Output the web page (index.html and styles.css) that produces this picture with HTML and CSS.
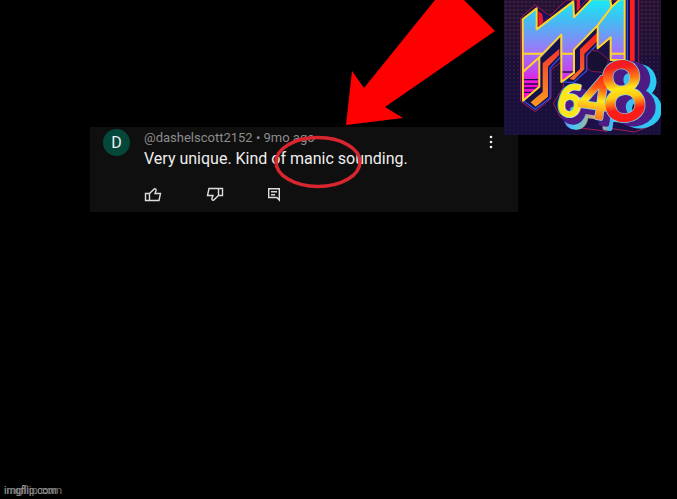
FILE: index.html
```html
<!DOCTYPE html>
<html lang="en">
<head>
<meta charset="utf-8">
<meta name="viewport" content="width=device-width, initial-scale=1">
<title>Comment</title>
<link rel="stylesheet" href="styles.css">
</head>
<body>
<main class="stage">
  <article class="comment">
    <span class="avatar">D</span>
    <div class="body">
      <div class="meta">@dashelscott2152 • 9mo ago</div>
      <p class="text">Very unique. Kind of manic sounding.</p>
      <div class="actions">
        <button class="action" type="button" aria-label="Like"><svg width="18" height="16" viewBox="0 0 18 16"><path d="M1.500 6.500h4v7h-4zM5.500 6.500l5-4.800q2 0 1.500 2l-1 2.800h5.500l-1.500 7h-9.500"/></svg></button>
        <button class="action" type="button" aria-label="Dislike"><svg width="18" height="16" viewBox="0 0 18 16"><path d="M16.500 8.500h-4v-7h4zM12.500 8.500l-5 4.800q-2 0-1.500-2l1-2.800h-5.500l1.500-7h9.500"/></svg></button>
        <button class="action reply" type="button" aria-label="Reply"><svg width="14" height="16" viewBox="0 0 14 16"><path d="M.7 1.700h10.600v11.300l-2.500-2.500h-8.100zM3 4.700h6M3 7.700h4"/></svg></button>
      </div>
    </div>
    <button class="more" type="button" aria-label="More options"><svg width="4" height="14" viewBox="0 0 4 14"><circle cx="2" cy="2" r="1.300"/><circle cx="2" cy="7" r="1.300"/><circle cx="2" cy="12" r="1.300"/></svg></button>
    <svg class="ring" width="90" height="54" viewBox="0 0 90 54" aria-hidden="true"><ellipse cx="45" cy="27" rx="42" ry="24.500"/></svg>
  </article>

  <svg class="arrow" width="150" height="126" viewBox="0 0 150 126" aria-hidden="true"><path d="M0 125 6 71 18 88 89 0H118L149 31 39 107 57 118Z"/></svg>

  <svg class="logo" width="157" height="135" viewBox="12 0 471 405" role="img" aria-label="M 648 logo">
    <defs>
      <pattern id="dots" width="12" height="12" patternUnits="userSpaceOnUse"><circle cx="6" cy="6" r="3" fill="#4b1943"/></pattern>
      <pattern id="tiles" width="12" height="12" patternUnits="userSpaceOnUse"><rect x="2" y="2" width="8" height="8" rx="2" fill="#3c1a3a"/></pattern>
      <linearGradient id="sky" x1="0" y1="0" x2="0" y2="300" gradientUnits="userSpaceOnUse"><stop offset="0" stop-color="#18eaf6"/><stop offset=".2" stop-color="#42bdf3"/><stop offset=".5" stop-color="#9b78f8"/><stop offset=".7" stop-color="#bd48ef"/><stop offset=".85" stop-color="#ff08d8"/></linearGradient>
      <linearGradient id="side" x1="0" y1="80" x2="0" y2="320" gradientUnits="userSpaceOnUse"><stop offset="0" stop-color="#ff1b18"/><stop offset=".4" stop-color="#f2472c"/><stop offset="1" stop-color="#ff9a20"/></linearGradient>
      <linearGradient id="four" x1="0" y1="225" x2="0" y2="350" gradientUnits="userSpaceOnUse"><stop offset="0" stop-color="#ff2418"/><stop offset=".3" stop-color="#ff5a18"/><stop offset=".6" stop-color="#ffe81a"/><stop offset="1" stop-color="#ff7a20"/></linearGradient>
      <linearGradient id="eight" x1="0" y1="180" x2="0" y2="365" gradientUnits="userSpaceOnUse"><stop offset=".1" stop-color="#f31c20"/><stop offset=".3" stop-color="#ff7a18"/><stop offset=".45" stop-color="#ffe81a"/><stop offset=".6" stop-color="#ffcb12"/><stop offset=".8" stop-color="#ff1c18"/></linearGradient>
      <linearGradient id="rim" x1="160" y1="0" x2="450" y2="0" gradientUnits="userSpaceOnUse"><stop offset="0" stop-color="#a64be0"/><stop offset=".25" stop-color="#45cdf0"/><stop offset=".5" stop-color="#ff9a4a"/><stop offset=".62" stop-color="#46b8f0"/><stop offset="1" stop-color="#2cc9f2"/></linearGradient>
      <linearGradient id="base" x1="0" y1="0" x2="0" y2="1"><stop offset="0" stop-color="#1e1030"/><stop offset=".45" stop-color="#181036"/><stop offset="1" stop-color="#17103d"/></linearGradient>
      <linearGradient id="fade" x1="0" y1="0" x2="0" y2="1"><stop offset=".2" stop-color="#17103d" stop-opacity="0"/><stop offset=".9" stop-color="#17103d" stop-opacity=".7"/></linearGradient>
    </defs>
    <path fill="url(#base)" d="M12 0h471v405H12z"/>
    <path fill="url(#tiles)" d="M12 0h471v168H12z"/>
    <path fill="url(#dots)" d="M12 168h471v237H12z"/>
    <path fill="url(#fade)" d="M12 0h471v405H12z"/>

    <path fill="#1b1148" stroke="#a51b50" stroke-width="3" d="M62 54 105 14 149 48 200 0H416V205L428 214 424 262 456 345 446 380 404 396 330 385 322 394 240 384 180 350 160 310 190 262V180L153 210V296L106 335 62 304Z"/>
    <path fill="#16114b" stroke="#314bdf" stroke-width="4" d="M118 176 182 108V170L150 205V294L106 328 70 302 118 258Z"/>
    <path fill="url(#side)" d="M128 190 178 146V164L144 200V290L107 320 92 307 128 276Z"/>
    <path fill="#16114b" stroke="#314bdf" stroke-width="4" d="M222 150 293 78V132L260 166V212L220 248 190 246 222 218Z"/>
    <path fill="url(#side)" d="M240 148 291 98V124L253 162V208L222 240 208 237 240 207Z"/>
    <path fill="#e91932" d="M115 34 145 54 115 80Z"/><path fill="#17135a" d="M126 34 150 49 130 66Z"/>
    <path fill="#e51c35" d="M230 0 260 0 230 37Z"/><path fill="#1c145b" d="M240 0h18l-18 22z"/>
    <path fill="#16114b" d="M374 0h38v202l-38-15z"/>
    <path fill="#ff2022" d="M390 0h14v196l-14-10z"/><path fill="#3348db" d="M380 0h4v185h-4z"/>
    <path fill="#171033" stroke="#7d194c" stroke-width="3" d="M276 151 295 154 325 178 320 218 275 214 262 205V168Z"/>

    <path fill="url(#sky)" d="M68 58 110 25V88L220 4 222 52 275-2H331L334 22 360-2H374V180H332V112L293 145V76L222 149V218L184 246V104L118 172V260L69 302Z"/>
    <path fill="#1b1148" d="M71 237h45v4H71zM71 250h45v4H71zM71 262h43v4H71zM71 275h30v4H71zM187 214h33v4h-33z"/>
    <path fill="none" stroke="#ffd52a" stroke-width="6" stroke-linejoin="round" d="M68 58 110 25V88L220 4 222 52 275-2H331L334 22 360-2H374V180H332V112L293 145V76L222 149V218L184 246V104L118 172V260L69 302ZM68 161H128M68 217 118 172M184 161H222M332 161H374M334 22 293 76"/>

    <g class="digits under" stroke="url(#rim)" fill="url(#rim)">
      <text x="190" y="374" font-size="134" transform="rotate(14 200 340)">6</text>
      <text x="264" y="378" font-size="176" transform="rotate(8 280 300)">4</text>
      <text x="346" y="382" font-size="246" transform="rotate(-8 375 280)">8</text>
    </g>
    <g class="digits depth">
      <text x="178" y="360" font-size="134" transform="rotate(14 200 340)">6</text>
      <text x="252" y="366" font-size="176" transform="rotate(8 280 300)">4</text>
      <text x="328" y="372" font-size="246" transform="rotate(-8 375 280)">8</text>
    </g>
    <g class="digits glow">
      <text x="163" y="346" font-size="134" transform="rotate(14 200 340)">6</text>
      <text x="234" y="353" font-size="176" transform="rotate(8 280 300)">4</text>
      <text x="302" y="360" font-size="246" transform="rotate(-8 375 280)">8</text>
    </g>
    <g class="digits face">
      <text x="163" y="346" font-size="134" fill="#ffe51c" stroke="#ffe51c" transform="rotate(14 200 340)">6</text>
      <text x="234" y="353" font-size="176" fill="url(#four)" stroke="url(#four)" transform="rotate(8 280 300)">4</text>
      <text x="302" y="360" font-size="246" fill="url(#eight)" stroke="url(#eight)" transform="rotate(-8 375 280)">8</text>
    </g>
  </svg>

  <footer class="watermark"><span>imgflip.com</span><span class="echo" aria-hidden="true">imgflip.com</span></footer>
</main>
</body>
</html>
```
FILE: styles.css
```css
* { box-sizing: border-box; }

body {
  margin: 0;
  background: #000;
  color: #eee;
  font-family: Roboto, "Liberation Sans", sans-serif;
}

.stage {
  position: relative;
  display: flex;
  flex-direction: column;
  min-height: 100vh;
  padding: 127px 0 0 90px;
  overflow: hidden;
}

.comment {
  position: relative;
  display: flex;
  align-items: flex-start;
  gap: 14px;
  width: 100%;
  max-width: 428px;
  padding: 2px 25px 9px 13px;
  background: #0f0f0f;
}

.avatar {
  display: grid;
  place-items: center;
  flex: none;
  width: 27px;
  height: 27px;
  border-radius: 50%;
  background: #04483b;
  font-size: 16px;
}

.body { flex: 1; }

.meta {
  color: #8c8c8c;
  font-size: 13px;
  line-height: 18px;
}

.text {
  margin: 0;
  font-size: 16px;
  line-height: 24px;
}

.actions {
  display: flex;
  gap: 44px;
  padding-top: 16px;
}

button {
  display: block;
  padding: 0;
  border: 0;
  background: none;
}

button svg { display: block; }

.action path {
  fill: none;
  stroke: #ddd;
  stroke-width: 1.4;
}

.more { margin-top: 6px; }
.more circle { fill: #eee; }

.ring {
  position: absolute;
  left: 183px;
  top: 8px;
}

.ring ellipse {
  fill: none;
  stroke: #d9262e;
  stroke-width: 3.5;
}

.arrow {
  position: absolute;
  left: 346px;
  top: 0;
  fill: #f00;
}

.logo {
  position: absolute;
  left: 504px;
  top: 0;
}

.digits {
  font-family: Roboto, "Liberation Sans", sans-serif;
  font-weight: 400;
  stroke-linejoin: round;
}

.under { stroke-width: 14; }
.depth { fill: #54187a; stroke: #4b1c86; stroke-width: 16; }
.glow { fill: #7fd5ee; stroke: #7fd5ee; stroke-width: 11; }
.face { stroke-width: 7; }

.watermark {
  display: grid;
  justify-content: start;
  margin: auto 0 1px -86px;
  color: #aaa;
  font-size: 10px;
  line-height: 14px;
}

.watermark span { grid-area: 1 / 1; }
.echo { color: #777; font-size: 11px; }
```
